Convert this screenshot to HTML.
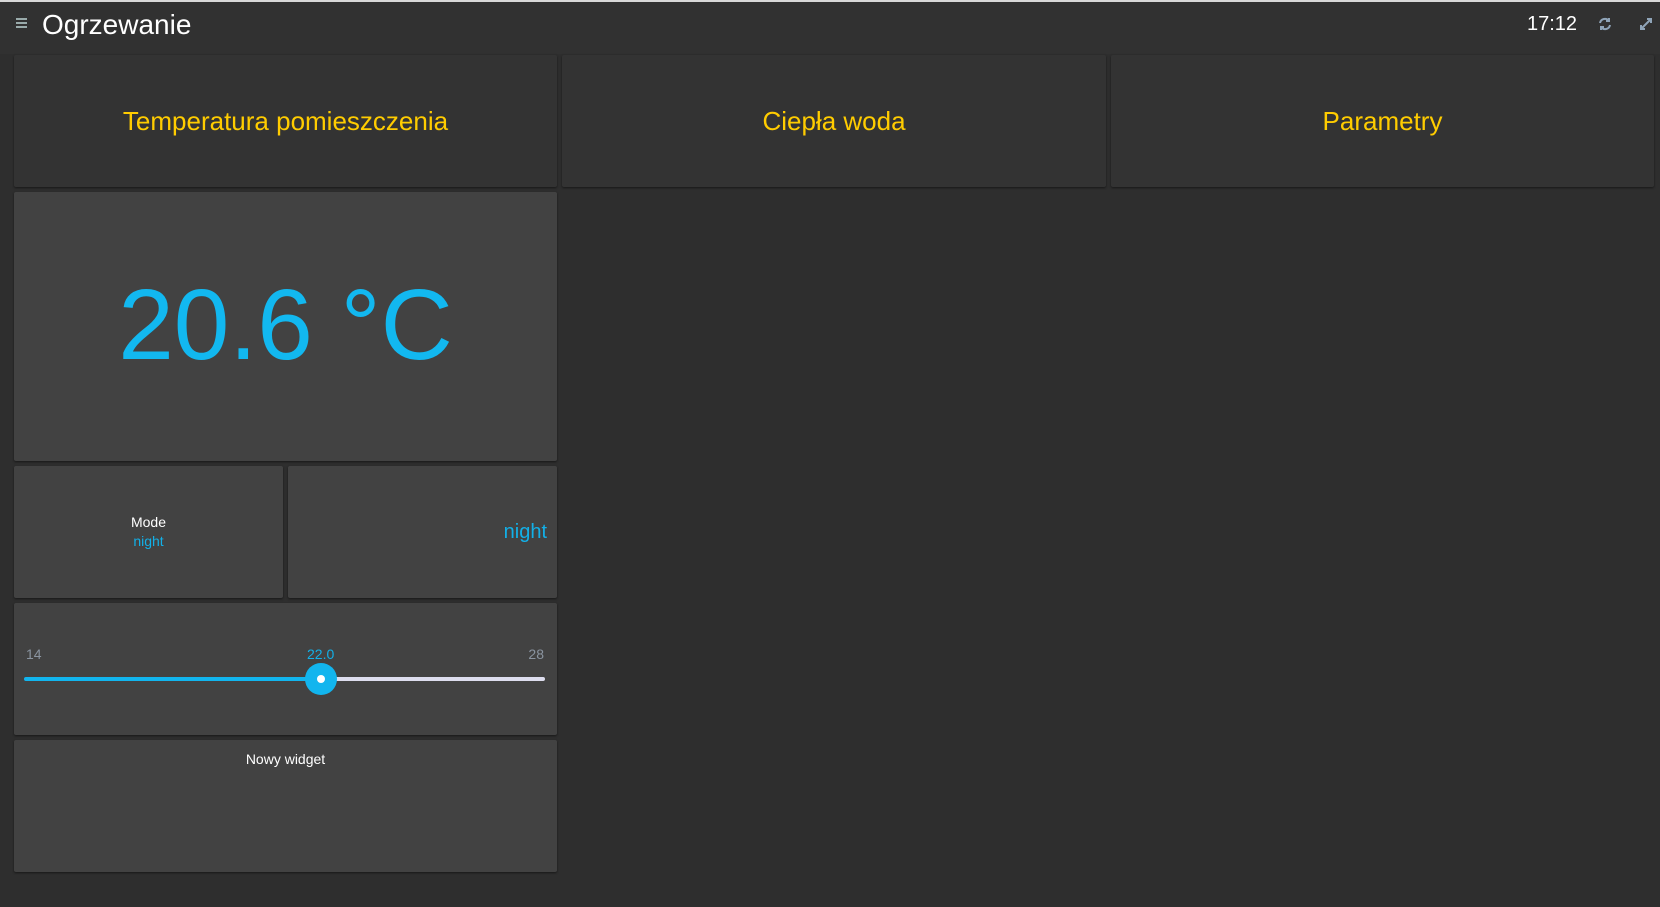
<!DOCTYPE html>
<html><head><meta charset="utf-8"><style>
*{margin:0;padding:0;box-sizing:border-box}
html,body{width:1660px;height:907px;overflow:hidden;background:#2e2e2e;font-family:"Liberation Sans",sans-serif}
.top{position:absolute;left:0;top:0;width:1660px;height:2px;background:#d8d8d8}
.hdr{position:absolute;left:0;top:2px;width:1660px;height:52px;background:#313131}
.t{position:absolute;background:#424242;box-shadow:0 1px 2px rgba(0,0,0,.5);border-radius:2px}
.y{background:#333;color:#ffcc00;font-size:26px;display:flex;align-items:center;justify-content:center}
.abs{position:absolute}
</style></head><body>
<div class="top"></div>
<div class="hdr">
  <div class="abs" style="left:16px;top:16px;width:11px;height:2px;background:#9aa;box-shadow:0 4px 0 #9aa,0 8px 0 #9aa"></div>
  <div class="abs" style="left:42px;top:7px;font-size:28px;color:#fff">Ogrzewanie</div>
  <div class="abs" style="left:1527px;top:11px;font-size:20px;color:#fff">17:12</div>
  <svg class="abs" style="left:1597px;top:14px" width="16" height="16" viewBox="0 0 16 16" fill="none" stroke="#8fa4b8" stroke-width="2"><path d="M3 7a5 5 0 0 1 9-2"/><path d="M13 9a5 5 0 0 1-9 2"/><path d="M12 2v3h-3M4 14v-3h3"/></svg>
  <svg class="abs" style="left:1638px;top:14px" width="16" height="16" viewBox="0 0 16 16" fill="none" stroke="#8fa4b8" stroke-width="2"><path d="M3 13l10-10M9 3h4v4M3 9v4h4"/></svg>
</div>
<div class="t y" style="left:14px;top:55px;width:543px;height:132px">Temperatura pomieszczenia</div>
<div class="t y" style="left:562px;top:55px;width:544px;height:132px">Ciepła woda</div>
<div class="t y" style="left:1111px;top:55px;width:543px;height:132px">Parametry</div>
<div class="t" style="left:14px;top:192px;width:543px;height:269px">
  <div class="abs" style="left:0;width:543px;top:76px;text-align:center;font-size:100px;color:#12b8f0">20.6 °C</div>
</div>
<div class="t" style="left:14px;top:466px;width:269px;height:132px">
  <div class="abs" style="left:0;width:269px;top:48px;text-align:center;font-size:14px;color:#fff">Mode</div>
  <div class="abs" style="left:0;width:269px;top:67px;text-align:center;font-size:14px;color:#12b0e8">night</div>
</div>
<div class="t" style="left:288px;top:466px;width:269px;height:132px">
  <div class="abs" style="right:10px;top:55px;font-size:20px;color:#12b0e8">night</div>
</div>
<div class="t" style="left:14px;top:603px;width:543px;height:132px">
  <div class="abs" style="left:12px;top:43px;font-size:14px;color:#8a94a0">14</div>
  <div class="abs" style="left:293px;top:43px;font-size:14px;color:#12b0e8">22.0</div>
  <div class="abs" style="right:13px;top:43px;font-size:14px;color:#8a94a0">28</div>
  <div class="abs" style="left:10px;top:74px;width:297px;height:4px;background:#12b5ee;border-radius:2px"></div>
  <div class="abs" style="left:307px;top:74px;width:224px;height:4px;background:#dde;border-radius:2px"></div>
  <div class="abs" style="left:291px;top:60px;width:32px;height:32px;border-radius:50%;background:#12b5ee"></div>
  <div class="abs" style="left:303px;top:72px;width:8px;height:8px;border-radius:50%;background:#fff"></div>
</div>
<div class="t" style="left:14px;top:740px;width:543px;height:132px">
  <div class="abs" style="left:0;width:543px;top:11px;text-align:center;font-size:14px;color:#fff">Nowy widget</div>
</div>
</body></html>
